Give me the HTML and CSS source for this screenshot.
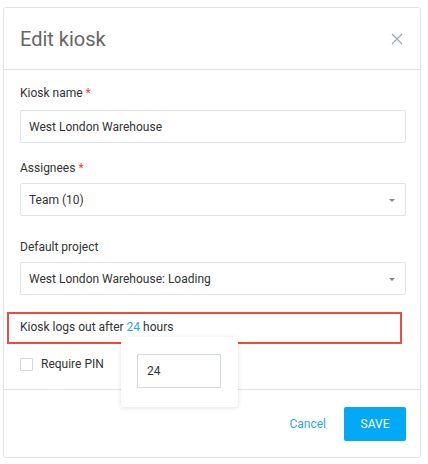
FILE: index.html
```html
<!DOCTYPE html>
<html>
<head>
<meta charset="utf-8">
<link rel="stylesheet" href="styles.css">
</head>
<body>
<div class="modal">
  <div class="modal-header">
    <h1 class="title">Edit kiosk</h1>
    <button class="close" aria-label="Close">
      <svg width="12" height="12" viewBox="0 0 12 12"><path d="M1 1L11 11M11 1L1 11" stroke="#9aa5ae" stroke-width="1.1" fill="none"/></svg>
    </button>
  </div>
  <div class="modal-body">
    <div class="field f1">
      <label class="label">Kiosk name <span class="req">*</span></label>
      <div class="input">West London Warehouse</div>
    </div>
    <div class="field f2">
      <label class="label">Assignees <span class="req">*</span></label>
      <div class="input select">Team (10)<span class="caret"></span></div>
    </div>
    <div class="field f3">
      <label class="label">Default project</label>
      <div class="input select">West London Warehouse: Loading<span class="caret"></span></div>
    </div>
    <div class="logout">Kiosk logs out after <span class="num">24</span> hours</div>
    <div class="pin">
      <span class="checkbox"></span>
      <span>Require PIN</span>
    </div>
    <div class="highlight"></div>
    <div class="popover">
      <div class="pop-input">24</div>
    </div>
  </div>
  <div class="modal-footer">
    <a class="cancel">Cancel</a>
    <button class="save">SAVE</button>
  </div>
</div>
</body>
</html>
```
FILE: styles.css
```css
* { box-sizing: border-box; }
html, body { margin: 0; padding: 0; background: #fff; }
body {
  font-family: Roboto, "Liberation Sans", sans-serif;
  font-size: 12px;
  color: #333;
}
.modal {
  margin: 7px 0 0 3px;
  width: 418px;
  height: 451px;
  border: 1px solid #dfe4e8;
  border-radius: 3px;
  display: flex;
  flex-direction: column;
  position: relative;
}
.modal-header {
  height: 62px;
  border-bottom: 1px solid #dfe4e8;
  display: flex;
  align-items: center;
  justify-content: space-between;
  padding: 0 17px 0 16px;
}
.title {
  margin: 0;
  font-size: 20px;
  font-weight: 400;
  color: #666;
  line-height: 24px;
}
.close {
  border: 0;
  background: none;
  padding: 0;
  width: 12px;
  height: 12px;
  display: flex;
}
.modal-body {
  position: relative;
  padding: 15px 14px 0 16px;
  height: 320px;
  border-bottom: 1px solid #dfe4e8;
}
.label {
  display: block;
  line-height: 16px;
  color: #333;
}
.req { color: #f44336; }
.field { display: flex; flex-direction: column; }
.f1 .label { margin-bottom: 9px; }
.f2 { margin-top: 17px; }
.f2 .label { margin-bottom: 7px; }
.f3 { margin-top: 23px; }
.f3 .label { margin-bottom: 7px; }
.input {
  height: 33px;
  border: 1px solid #dfe4e8;
  border-radius: 2px;
  padding: 0 8px;
  display: flex;
  align-items: center;
  color: #333;
  position: relative;
}
.caret {
  position: absolute;
  right: 10px;
  top: 15px;
  width: 0;
  height: 0;
  border-left: 3px solid transparent;
  border-right: 3px solid transparent;
  border-top: 3px solid #888;
}
.logout {
  margin-top: 24px;
  line-height: 16px;
}
.num { color: #2aa6e8; }
.pin {
  margin-top: 21px;
  display: flex;
  align-items: center;
  line-height: 16px;
}
.checkbox {
  width: 13px;
  height: 13px;
  border: 1px solid #d3d9de;
  border-radius: 1px;
  margin-right: 8px;
}
.highlight {
  position: absolute;
  left: 3px;
  top: 242px;
  width: 395px;
  height: 32px;
  border: 2px solid #ec4b3f;
  pointer-events: none;
}
.popover {
  position: absolute;
  left: 117px;
  top: 267px;
  width: 117px;
  height: 70px;
  background: #fff;
  border-radius: 2px;
  box-shadow: 0 1px 5px rgba(0,0,0,0.12);
  padding: 17px 16px;
  z-index: 2;
}
.pop-input {
  width: 84px;
  height: 34px;
  border: 1px solid #d3dbe1;
  padding: 0 9px;
  display: flex;
  align-items: center;
  color: #333;
}
.modal-footer {
  flex: 1;
  display: flex;
  align-items: center;
  justify-content: flex-end;
  padding: 0 14px 0 16px;
}
.cancel {
  color: #2aa6e8;
  margin-right: 18px;
  cursor: pointer;
}
.save {
  width: 62px;
  height: 34px;
  background: #03a9f4;
  color: #fff;
  border: 0;
  border-radius: 2px;
  font-family: Roboto, "Liberation Sans", sans-serif;
  font-size: 12px;
  padding: 0;
}
```
